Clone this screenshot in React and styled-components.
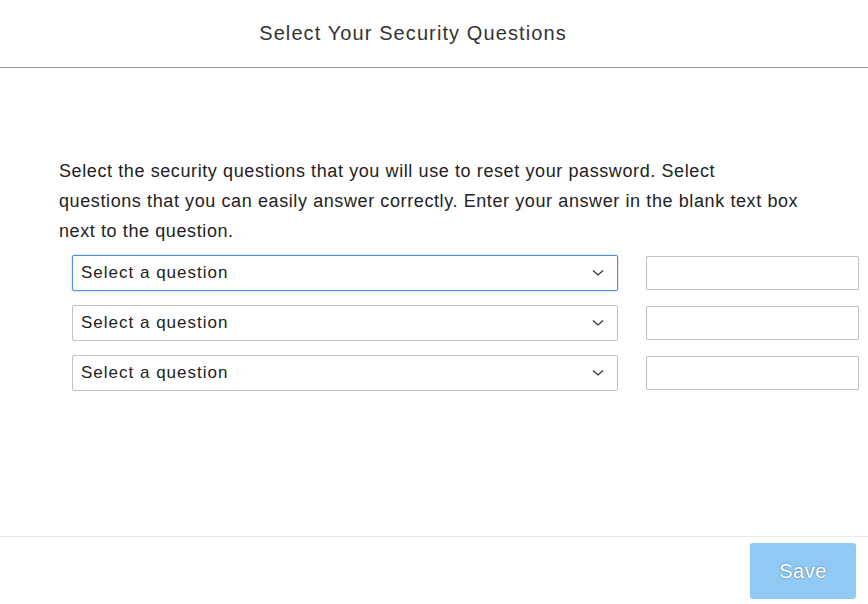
import styled, { createGlobalStyle } from "styled-components";

const GlobalStyle = createGlobalStyle`
  html, body {
    margin: 0;
    padding: 0;
    background: #fff;
  }
  body {
    font-family: "Liberation Sans", Arial, sans-serif;
    color: #222;
  }
`;

const Page = styled.div`
  display: flex;
  flex-direction: column;
  height: 100vh;
`;

const Header = styled.header`
  height: 68px;
  display: flex;
  align-items: center;
  justify-content: center;
  padding-right: 42px;
  border-bottom: 1px solid #999;
  box-sizing: border-box;
  flex-shrink: 0;
`;

const Title = styled.h1`
  margin: 0;
  font-size: 20px;
  font-weight: normal;
  letter-spacing: 1.1px;
  color: #333;
`;

const Main = styled.main`
  flex: 1;
  padding: 88px 0 0 59px;
`;

const Intro = styled.p`
  margin: 0 0 9px;
  font-size: 18px;
  line-height: 30px;
  letter-spacing: 0.6px;
  color: #222;
  max-width: 742px;
`;

const Rows = styled.div`
  display: flex;
  flex-direction: column;
  gap: 14px;
  margin-left: 13px;
`;

const Row = styled.div`
  display: flex;
  align-items: center;
  gap: 28px;
`;

const SelectBox = styled.div`
  flex-shrink: 0;
  width: 546px;
  height: 36px;
  box-sizing: border-box;
  border: 1px solid ${(p) => (p.$focused ? "#4a90e2" : "#c2c2c2")};
  box-shadow: ${(p) => (p.$focused ? "0 0 2px rgba(74,144,226,0.6)" : "none")};
  border-radius: 2px;
  display: flex;
  align-items: center;
  padding: 0 13px 0 8px;
  font-size: 17px;
  letter-spacing: 1px;
  color: #222;
  background: #fff;
`;

const SelectLabel = styled.span`
  flex: 1;
`;

const Chevron = styled.svg`
  width: 12px;
  height: 8px;
`;

const AnswerInput = styled.input`
  flex-shrink: 0;
  width: 213px;
  height: 34px;
  box-sizing: border-box;
  border: 1px solid #c2c2c2;
  border-radius: 1px;
  font-family: inherit;
  font-size: 16px;
  padding: 0 8px;
  outline: none;
`;

const Footer = styled.footer`
  height: 68px;
  flex-shrink: 0;
  border-top: 1px solid #e8e8e8;
  box-sizing: border-box;
  display: flex;
  justify-content: flex-end;
  align-items: flex-start;
  padding: 6px 12px 0 0;
`;

const SaveButton = styled.button`
  width: 106px;
  height: 56px;
  border: none;
  border-radius: 3px;
  background: #90caf4;
  color: #fff;
  font-family: inherit;
  font-size: 20px;
  letter-spacing: 0.5px;
  text-shadow: 0 0 2px rgba(0, 0, 0, 0.45);
  cursor: not-allowed;
`;

const questions = [true, false, false];

export default function App() {
  return (
    <>
      <GlobalStyle />
      <Page>
        <Header>
          <Title>Select Your Security Questions</Title>
        </Header>
        <Main>
          <Intro>
            Select the security questions that you will use to reset your password. Select
            questions that you can easily answer correctly. Enter your answer in the blank text box
            next to the question.
          </Intro>
          <Rows>
            {questions.map((focused, i) => (
              <Row key={i}>
                <SelectBox $focused={focused}>
                  <SelectLabel>Select a question</SelectLabel>
                  <Chevron viewBox="0 0 12 8">
                    <path d="M1 1.5 L6 6 L11 1.5" fill="none" stroke="#333" strokeWidth="1.3" />
                  </Chevron>
                </SelectBox>
                <AnswerInput type="text" />
              </Row>
            ))}
          </Rows>
        </Main>
        <Footer>
          <SaveButton disabled>Save</SaveButton>
        </Footer>
      </Page>
    </>
  );
}
